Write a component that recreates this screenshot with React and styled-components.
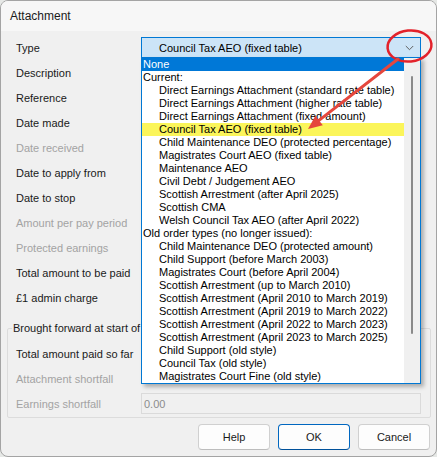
import React from 'react';
import styled, { createGlobalStyle } from 'styled-components';

const GlobalStyle = createGlobalStyle`
  html, body {
    margin: 0;
    padding: 0;
    background: #e6e8e6;
  }
  body {
    font-family: "Liberation Sans", Arial, sans-serif;
    font-size: 11px;
    color: #000;
  }
  * { box-sizing: border-box; }
`;

const Window = styled.div`
  position: relative;
  width: 437px;
  height: 457px;
  border: 1px solid #a4a4a4;
  border-radius: 8px;
  background: #f0f0f0;
  overflow: hidden;
`;

const TitleBar = styled.div`
  height: 30px;
  display: flex;
  align-items: center;
  padding-left: 9px;
  background: #f7f7f7;
  font-size: 12px;
  color: #1a1a1a;
`;

const Body = styled.div`
  padding: 4px 5px 0 6px;
`;

const Form = styled.div`
  padding-left: 9px;
`;

const Row = styled.div`
  height: 25px;
  display: grid;
  grid-template-columns: 125px 280px;
  align-items: center;
`;

const Label = styled.span`
  color: ${(p) => (p.$disabled ? '#a3a3a3' : '#1a1a1a')};
  white-space: nowrap;
`;

const ComboWrap = styled.div`
  position: relative;
  height: 21px;
`;

const Combo = styled.div`
  height: 21px;
  display: flex;
  align-items: center;
  justify-content: space-between;
  padding: 0 6px 0 17px;
  background: #cce4f7;
  border: 1px solid #0078d4;
`;

const Field = styled.div`
  height: 21px;
  display: flex;
  align-items: center;
  padding-left: 2px;
  border: 1px solid ${(p) => (p.$disabled ? '#dadada' : '#b8b8b8')};
  background: ${(p) => (p.$disabled ? '#f0f0f0' : '#fff')};
  color: #8c8c8c;
`;

const DropList = styled.div`
  position: absolute;
  top: 20px;
  left: 0;
  width: 280px;
  display: flex;
  background: #fff;
  border: 1px solid #0078d4;
  box-shadow: 3px 3px 4px rgba(0, 0, 0, 0.28);
  z-index: 5;
`;

const Items = styled.div`
  flex: 1;
  display: flex;
  flex-direction: column;
`;

const Item = styled.div`
  height: 13px;
  line-height: 13px;
  padding-left: ${(p) => (p.$header ? '1px' : '17px')};
  white-space: nowrap;
  background: ${(p) => (p.$selected ? '#0078d7' : p.$marked ? '#fbf55a' : 'transparent')};
  color: ${(p) => (p.$selected ? '#fff' : '#000')};
`;

const ScrollTrack = styled.div`
  width: 16px;
  background: #f0f0f0;
  display: flex;
  justify-content: center;
`;

const Thumb = styled.div`
  width: 2px;
  height: 258px;
  margin-top: 18px;
  background: #8a8a8a;
  border-radius: 1px;
`;

const Group = styled.fieldset`
  margin: 11px 0 0 0;
  padding: 0 8px 1px 8px;
  border: 1px solid #dcdcdc;
  border-radius: 2px;
`;

const Legend = styled.legend`
  padding: 0 1px;
  margin-left: -4px;
  line-height: 15px;
  color: #1a1a1a;
  white-space: nowrap;
`;

const GroupRows = styled.div`
  padding-top: 5px;
`;

const Buttons = styled.div`
  display: flex;
  justify-content: flex-end;
  gap: 8px;
  margin-top: 6px;
  padding-right: 1px;
`;

const Button = styled.button`
  width: 72px;
  height: 26px;
  font-family: inherit;
  font-size: 11px;
  color: #1a1a1a;
  background: #fdfdfd;
  border: 1px solid ${(p) => (p.$primary ? '#0067c0' : '#d0d0d0')};
  border-bottom-color: ${(p) => (p.$primary ? '#00519a' : '#bdbdbd')};
  border-radius: 4px;
  padding: 0;
`;

const Overlay = styled.svg`
  position: absolute;
  left: -1px;
  top: -1px;
  pointer-events: none;
  z-index: 10;
`;

const items = [
  { t: 'None', header: true, selected: true },
  { t: 'Current:', header: true },
  { t: 'Direct Earnings Attachment (standard rate table)' },
  { t: 'Direct Earnings Attachment (higher rate table)' },
  { t: 'Direct Earnings Attachment (fixed amount)' },
  { t: 'Council Tax AEO (fixed table)', marked: true },
  { t: 'Child Maintenance DEO (protected percentage)' },
  { t: 'Magistrates Court AEO (fixed table)' },
  { t: 'Maintenance AEO' },
  { t: 'Civil Debt / Judgement AEO' },
  { t: 'Scottish Arrestment (after April 2025)' },
  { t: 'Scottish CMA' },
  { t: 'Welsh Council Tax AEO (after April 2022)' },
  { t: 'Old order types (no longer issued):', header: true },
  { t: 'Child Maintenance DEO (protected amount)' },
  { t: 'Child Support (before March 2003)' },
  { t: 'Magistrates Court (before April 2004)' },
  { t: 'Scottish Arrestment (up to March 2010)' },
  { t: 'Scottish Arrestment (April 2010 to March 2019)' },
  { t: 'Scottish Arrestment (April 2019 to March 2022)' },
  { t: 'Scottish Arrestment (April 2022 to March 2023)' },
  { t: 'Scottish Arrestment (April 2023 to March 2025)' },
  { t: 'Child Support (old style)' },
  { t: 'Council Tax (old style)' },
  { t: 'Magistrates Court Fine (old style)' },
];

const rows = [
  { label: 'Description' },
  { label: 'Reference' },
  { label: 'Date made' },
  { label: 'Date received', disabled: true },
  { label: 'Date to apply from' },
  { label: 'Date to stop' },
  { label: 'Amount per pay period', disabled: true },
  { label: 'Protected earnings', disabled: true },
  { label: 'Total amount to be paid' },
  { label: '£1 admin charge' },
];

const Chevron = () => (
  <svg width="9" height="6" viewBox="0 0 9 6">
    <path d="M0.8 1 L4.5 4.7 L8.2 1" fill="none" stroke="#5f5f5f" strokeWidth="1" />
  </svg>
);

export default function App() {
  return (
    <>
      <GlobalStyle />
      <Window>
        <TitleBar>Attachment</TitleBar>
        <Body>
          <Form>
            <Row>
              <Label>Type</Label>
              <ComboWrap>
                <Combo>
                  <span>Council Tax AEO (fixed table)</span>
                  <Chevron />
                </Combo>
                <DropList>
                  <Items>
                    {items.map((it) => (
                      <Item key={it.t} $header={it.header} $selected={it.selected} $marked={it.marked}>
                        {it.t}
                      </Item>
                    ))}
                  </Items>
                  <ScrollTrack>
                    <Thumb />
                  </ScrollTrack>
                </DropList>
              </ComboWrap>
            </Row>
            {rows.map((r) => (
              <Row key={r.label}>
                <Label $disabled={r.disabled}>{r.label}</Label>
                <Field $disabled={r.disabled} />
              </Row>
            ))}
          </Form>
          <Group>
            <Legend>Brought forward at start of year</Legend>
            <GroupRows>
              <Row>
                <Label>Total amount paid so far</Label>
                <Field />
              </Row>
              <Row>
                <Label $disabled>Attachment shortfall</Label>
                <span />
              </Row>
              <Row>
                <Label $disabled>Earnings shortfall</Label>
                <Field $disabled>0.00</Field>
              </Row>
            </GroupRows>
          </Group>
          <Buttons>
            <Button>Help</Button>
            <Button $primary>OK</Button>
            <Button>Cancel</Button>
          </Buttons>
        </Body>
        <Overlay width="437" height="457" viewBox="0 0 437 457">
          <ellipse cx="409.5" cy="46" rx="22" ry="15.5" transform="rotate(-6 409.5 46)"
            fill="none" stroke="#e3222b" strokeWidth="2.5" />
          <line x1="398" y1="59" x2="319" y2="120.4" stroke="#e5473d" strokeWidth="3" strokeLinecap="round" />
          <polygon points="308,129 322.8,125.2 315.4,115.7" fill="#e5473d" />
        </Overlay>
      </Window>
    </>
  );
}
